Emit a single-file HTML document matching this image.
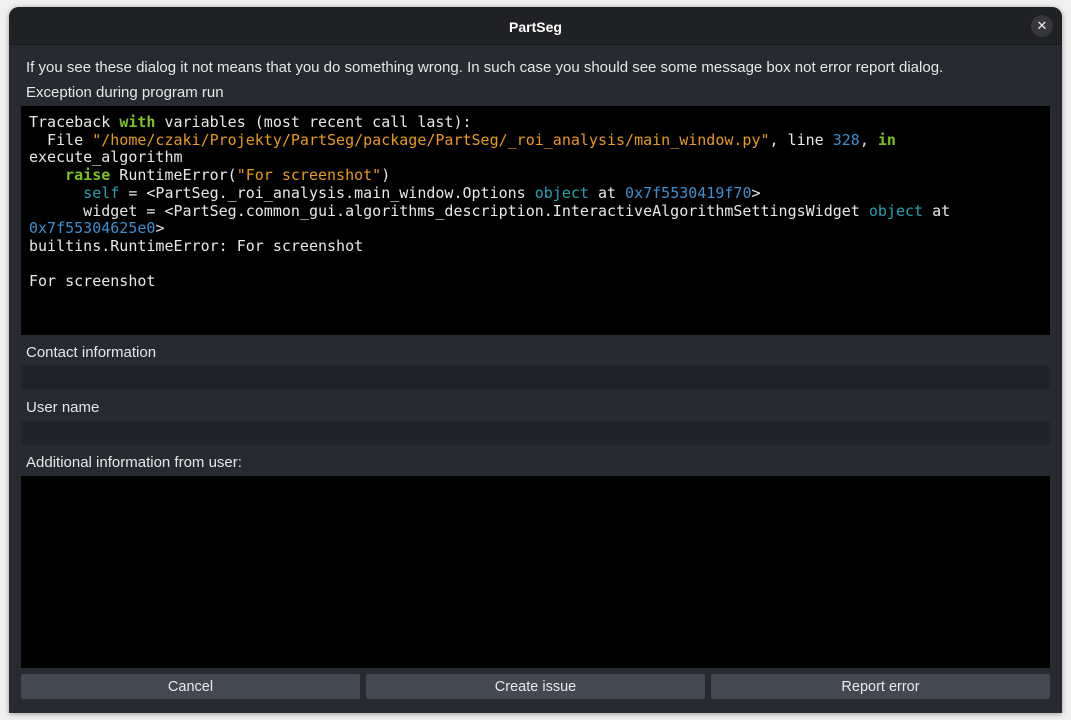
<!DOCTYPE html>
<html><head><style>
html,body{margin:0;padding:0;width:1071px;height:720px;background:#f0f0f0;overflow:hidden;font-family:"Liberation Sans",sans-serif;}
.win{position:absolute;left:9px;top:7px;width:1053px;height:706px;background:#272a31;border-radius:10px 10px 0 0;overflow:hidden;box-shadow:0 1px 6px rgba(0,0,0,.35);}
.title{position:absolute;left:0;top:0;width:100%;height:37px;background:#202124;border-bottom:1px solid #18191b;color:#fff;font-weight:bold;font-size:14px;text-align:center;line-height:40px;}
.close{position:absolute;right:9px;top:8px;width:22px;height:22px;border-radius:11px;background:#36373b;color:#eee;font-size:13px;line-height:22px;text-align:center;font-weight:normal;}
.lbl{position:absolute;left:17px;color:#e6e6e6;font-size:15px;white-space:nowrap;}
.black{position:absolute;left:12px;width:1029px;background:#000;}
.inp{position:absolute;left:12px;width:1029px;height:24px;background:#222328;border-radius:2px;}
pre{margin:0;position:absolute;left:8px;top:8px;font-family:"DejaVu Sans Mono",monospace;font-size:15px;line-height:17.7px;color:#e8e8e8;}
.g{color:#7cc225;font-weight:bold}.o{color:#e89a1a}.b{color:#3d8fd0}.c{color:#22a2b0}
.btn{position:absolute;top:667px;height:25px;width:339px;background:#434852;border-radius:2px;color:#e8e8e8;font-size:14.5px;text-align:center;line-height:27px;}
</style></head><body>
<div class="win">
<div class="title">PartSeg<div class="close">✕</div></div>
<div class="lbl" style="top:52px">If you see these dialog it not means that you do something wrong. In such case you should see some message box not error report dialog.</div>
<div class="lbl" style="top:77px">Exception during program run</div>
<div class="black" style="top:99px;height:229px"><pre>Traceback <span class="g">with</span> variables (most recent call last):
  File <span class="o">"/home/czaki/Projekty/PartSeg/package/PartSeg/_roi_analysis/main_window.py"</span>, line <span class="b">328</span>, <span class="g">in</span>
execute_algorithm
    <span class="g">raise</span> RuntimeError(<span class="o">"For screenshot"</span>)
      <span class="c">self</span> = &lt;PartSeg._roi_analysis.main_window.Options <span class="c">object</span> at <span class="b">0x7f5530419f70</span>&gt;
      widget = &lt;PartSeg.common_gui.algorithms_description.InteractiveAlgorithmSettingsWidget <span class="c">object</span> at
<span class="b">0x7f55304625e0</span>&gt;
builtins.RuntimeError: For screenshot

For screenshot</pre></div>
<div class="lbl" style="top:337px">Contact information</div>
<div class="inp" style="top:359px"></div>
<div class="lbl" style="top:392px">User name</div>
<div class="inp" style="top:414px"></div>
<div class="lbl" style="top:447px">Additional information from user:</div>
<div class="black" style="top:469px;height:192px"></div>
<div class="btn" style="left:12px">Cancel</div>
<div class="btn" style="left:357px">Create issue</div>
<div class="btn" style="left:702px">Report error</div>
</div>
</body></html>
